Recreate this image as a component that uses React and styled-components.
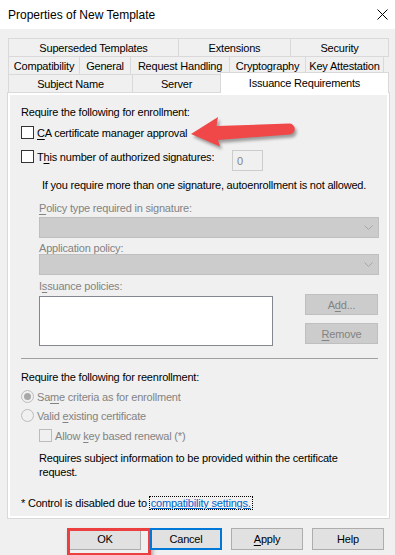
import React from 'react'
import styled, { createGlobalStyle } from 'styled-components'

const GlobalStyle = createGlobalStyle`
  html, body {
    margin: 0;
    padding: 0;
    background: #f0f0f0;
  }
  * {
    box-sizing: border-box;
  }
`

const Window = styled.div`
  position: relative;
  width: 395px;
  height: 555px;
  overflow: hidden;
  background: #f0f0f0;
  font-family: "Liberation Sans", Arial, sans-serif;
  font-size: 11px;
  letter-spacing: -0.2px;
  color: #000;
`

const TitleBar = styled.div`
  height: 29px;
  background: #fff;
  display: flex;
  align-items: center;
  justify-content: space-between;
  padding: 0 7px 0 8px;
`

const Title = styled.div`
  font-size: 12px;
  letter-spacing: 0;
  line-height: 16px;
  padding-top: 1px;
`

const Body = styled.div`
  padding: 9px 6px 0 7px;
`

const Tabs = styled.div`
  margin-left: 1px;
  display: flex;
  flex-direction: column;
`

const TabRow = styled.div`
  display: flex;
  align-items: flex-start;
  height: 19px;
  & + & {
    margin-top: -1px;
  }
`

const Tab = styled.div`
  width: ${({ $w }) => $w}px;
  height: 19px;
  border: 1px solid #d9d9d9;
  background: #f0f0f0;
  display: flex;
  align-items: center;
  justify-content: center;
  line-height: 16px;
  white-space: nowrap;
  & + & {
    margin-left: -1px;
  }
  ${({ $active }) => $active && `
    position: relative;
    z-index: 1;
    height: 21px;
    margin-top: -2px;
    background: #fff;
    border-bottom: none;
    padding-bottom: 1px;
  `}
`

const Panel = styled.div`
  margin-top: -1px;
  width: 383px;
  height: 427px;
  border: 1px solid #d9d9d9;
  background: #f0f0f0;
  box-shadow: inset 0 0 0 2px #fff;
  padding: 11px 11px 0 13px;
  display: flex;
  flex-direction: column;
`

const Text = styled.div`
  line-height: 16px;
  margin-top: ${({ $mt }) => $mt || 0}px;
  margin-left: ${({ $ml }) => $ml || 0}px;
  color: ${({ $disabled }) => ($disabled ? '#838383' : '#000')};
  white-space: nowrap;
`

const Note = styled.div`
  line-height: 14px;
  margin-top: ${({ $mt }) => $mt || 0}px;
  margin-left: 18px;
  width: 310px;
`

const FieldLabel = styled.div`
  line-height: 12px;
  height: 12px;
  margin-top: ${({ $mt }) => $mt || 0}px;
  margin-left: 18px;
  color: #838383;
  white-space: nowrap;
`

const Row = styled.label`
  display: flex;
  align-items: flex-start;
  line-height: 16px;
  margin-top: ${({ $mt }) => $mt || 0}px;
  margin-left: ${({ $ml }) => $ml || 0}px;
  color: ${({ $disabled }) => ($disabled ? '#838383' : '#000')};
  white-space: nowrap;
`

const RowLabel = styled.span`
  flex: none;
  width: ${({ $w }) => ($w ? `${$w}px` : 'auto')};
`

const Box = styled.span`
  flex: none;
  width: 13px;
  height: 13px;
  margin: 1px 3px 0 0;
  border: 1px solid ${({ $disabled }) => ($disabled ? '#bcbcbc' : '#333')};
  background: ${({ $disabled }) => ($disabled ? '#f0f0f0' : '#fff')};
`

const Radio = styled.span`
  flex: none;
  width: 13px;
  height: 13px;
  margin: 1px 3px 0 0;
  border-radius: 50%;
  border: 1px solid #bcbcbc;
  background: #f0f0f0;
  display: flex;
  align-items: center;
  justify-content: center;
  &::after {
    content: '';
    width: 7px;
    height: 7px;
    border-radius: 50%;
    background: ${({ $checked }) => ($checked ? '#a8a8a8' : 'transparent')};
  }
`

const Key = styled.span`
  text-decoration: underline;
  text-underline-offset: 2px;
`

const NumberBox = styled.div`
  flex: none;
  width: 31px;
  height: 21px;
  margin-top: 1px;
  border: 1px solid #cccccc;
  background: #f0f0f0;
  color: #838383;
  padding: 2px 0 0 4px;
  line-height: 16px;
`

const Select = styled.div`
  width: 340px;
  height: 21px;
  margin-top: ${({ $mt }) => $mt || 0}px;
  margin-left: 18px;
  border: 1px solid #bfbfbf;
  background: #cccccc;
  display: flex;
  align-items: center;
  justify-content: flex-end;
  padding-right: 5px;
`

const ListRow = styled.div`
  display: flex;
  align-items: flex-start;
  margin-top: 2px;
  margin-left: 18px;
`

const ListBox = styled.div`
  width: 234px;
  height: 50px;
  margin-top: 2px;
  border: 1px solid #828790;
  background: #fff;
`

const SideButtons = styled.div`
  display: flex;
  flex-direction: column;
  gap: 8px;
  margin-left: 32px;
`

const SmallButton = styled.div`
  width: 73px;
  height: 21px;
  border: 1px solid #bfbfbf;
  background: #cccccc;
  color: #838383;
  display: flex;
  align-items: center;
  justify-content: center;
  line-height: 16px;
`

const Separator = styled.div`
  height: 1px;
  width: 357px;
  margin-top: 12px;
  background: #a0a0a0;
`

const Link = styled.span`
  color: #0066cc;
  text-decoration: underline;
  outline: 1px dotted #000;
  outline-offset: 0;
  padding: 0 1px;
`

const ButtonBar = styled.div`
  display: flex;
  justify-content: flex-end;
  gap: 9px;
  margin-top: 9px;
  padding-right: 5px;
`

const Button = styled.div`
  position: relative;
  width: 72px;
  height: 22px;
  border: ${({ $default }) => ($default ? '2px solid #0078d7' : '1px solid #adadad')};
  background: #e1e1e1;
  display: flex;
  align-items: center;
  justify-content: center;
  line-height: 16px;
  ${({ $highlight }) => $highlight && `
    &::after {
      content: '';
      position: absolute;
      left: -3px;
      top: -1px;
      width: 78px;
      height: 22px;
      border: 3px solid #ec3f3f;
      box-shadow: 2px 3px 4px rgba(0, 0, 0, 0.3);
    }
  `}
`

const Arrow = styled.svg`
  position: absolute;
  left: 185px;
  top: 112px;
  overflow: visible;
`

const CloseIcon = () => (
  <svg width="11" height="11" viewBox="0 0 11 11">
    <path d="M0.5 0.5 L10.5 10.5 M10.5 0.5 L0.5 10.5" stroke="#000" strokeWidth="1" fill="none" />
  </svg>
)

const Chevron = () => (
  <svg width="9" height="5" viewBox="0 0 9 5">
    <path d="M0.5 0.5 L4.5 4.5 L8.5 0.5" stroke="#a6a6a6" strokeWidth="1" fill="none" />
  </svg>
)

const arrowPath =
  'M6 22 L33 5 L31.5 14 L104 11.5 A5.5 5.5 0 0 1 104.5 22.5 L33 28 L35 34.5 Z'

const tabRows = [
  [
    { label: 'Superseded Templates', w: 171 },
    { label: 'Extensions', w: 113 },
    { label: 'Security', w: 99 },
  ],
  [
    { label: 'Compatibility', w: 72 },
    { label: 'General', w: 52 },
    { label: 'Request Handling', w: 100 },
    { label: 'Cryptography', w: 77 },
    { label: 'Key Attestation', w: 79 },
  ],
  [
    { label: 'Subject Name', w: 125 },
    { label: 'Server', w: 89 },
    { label: 'Issuance Requirements', w: 169, active: true },
  ],
]

export default function App() {
  return (
    <Window>
      <GlobalStyle />
      <TitleBar>
        <Title>Properties of New Template</Title>
        <CloseIcon />
      </TitleBar>
      <Body>
        <Tabs>
          {tabRows.map((row, i) => (
            <TabRow key={i}>
              {row.map((tab) => (
                <Tab key={tab.label} $w={tab.w} $active={tab.active}>
                  {tab.label}
                </Tab>
              ))}
            </TabRow>
          ))}
        </Tabs>
        <Panel>
          <Text>Require the following for enrollment:</Text>
          <Row $mt={5}>
            <Box />
            <RowLabel><Key>C</Key>A certificate manager approval</RowLabel>
          </Row>
          <Row $mt={8}>
            <Box />
            <RowLabel $w={195}>T<Key>h</Key>is number of authorized signatures:</RowLabel>
            <NumberBox>0</NumberBox>
          </Row>
          <Text $mt={6} $ml={21}>
            If you require more than one signature, autoenrollment is not allowed.
          </Text>
          <FieldLabel $mt={9}><Key>P</Key>olicy type required in signature:</FieldLabel>
          <Select $mt={3}><Chevron /></Select>
          <FieldLabel $mt={4}>Applicati<Key>o</Key>n policy:</FieldLabel>
          <Select><Chevron /></Select>
          <FieldLabel $mt={5}>I<Key>s</Key>suance policies:</FieldLabel>
          <ListRow>
            <ListBox />
            <SideButtons>
              <SmallButton>A<Key>d</Key>d...</SmallButton>
              <SmallButton><Key>R</Key>emove</SmallButton>
            </SideButtons>
          </ListRow>
          <Separator />
          <Text $mt={10}>Require the following for reenrollment:</Text>
          <Row $mt={4} $disabled>
            <Radio $checked />
            <RowLabel>Sa<Key>m</Key>e criteria as for enrollment</RowLabel>
          </Row>
          <Row $mt={3} $disabled>
            <Radio />
            <RowLabel>Valid <Key>e</Key>xisting certificate</RowLabel>
          </Row>
          <Row $mt={4} $ml={18} $disabled>
            <Box $disabled />
            <RowLabel>Allow <Key>k</Key>ey based renewal (*)</RowLabel>
          </Row>
          <Note $mt={7}>
            Requires subject information to be provided within the certificate request.
          </Note>
          <Text $mt={16}>
            * Control is disabled due to <Link>compatibility settings.</Link>
          </Text>
        </Panel>
        <ButtonBar>
          <Button $highlight>OK</Button>
          <Button $default>Cancel</Button>
          <Button><Key>A</Key>pply</Button>
          <Button>Help</Button>
        </ButtonBar>
      </Body>
      <Arrow width="115" height="42" viewBox="0 0 115 42">
        <defs>
          <filter id="arrowShadow" x="-20%" y="-40%" width="140%" height="180%">
            <feGaussianBlur stdDeviation="1.5" />
          </filter>
        </defs>
        <path d={arrowPath} fill="rgba(0,0,0,0.35)" transform="translate(2 3)" filter="url(#arrowShadow)" />
        <path d={arrowPath} fill="#f04848" />
      </Arrow>
    </Window>
  )
}
